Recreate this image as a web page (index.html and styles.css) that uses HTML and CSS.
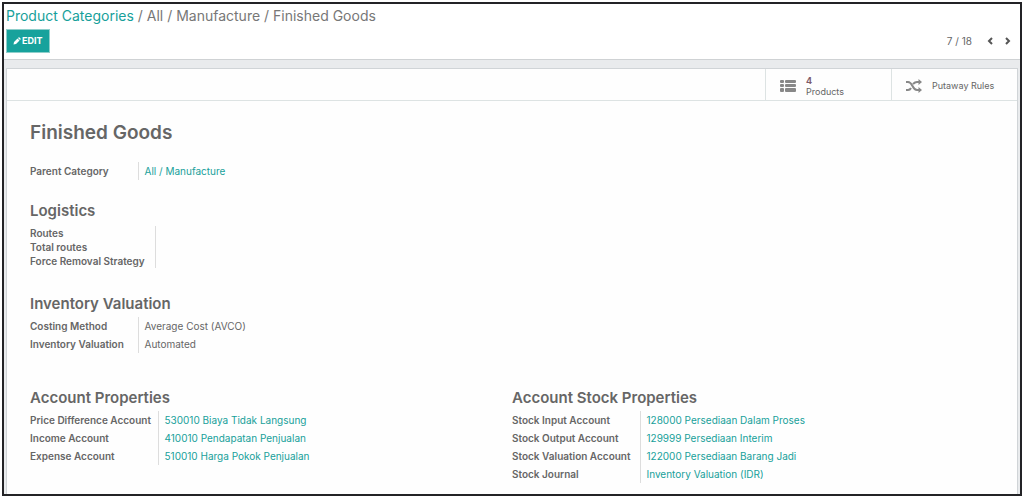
FILE: index.html
```html
<!DOCTYPE html>
<html lang="en">

<head>
    <meta charset="UTF-8">
    <meta name="viewport" content="width=device-width, initial-scale=1.0">
    <title>Finished Goods</title>
    <link rel="stylesheet" href="styles.css">
</head>

<body>
    <div class="window">
        <header class="control-panel">
            <nav class="breadcrumb">
                <a href="#">Product Categories</a> / All / Manufacture / Finished Goods
            </nav>
            <div class="toolbar">
                <button class="edit-button" type="button">
                    <svg class="pencil" viewBox="0 0 16 16"><path d="M1 15l1-5 7-7 4 4-7 7zM10 2l1-1q1-1 2 0l2 2q1 1 0 2l-1 1z"/></svg>
                    EDIT
                </button>
                <div class="pager">
                    <span class="pager-value">7 / 18</span>
                    <button class="pager-button" type="button" aria-label="Previous">
                        <svg viewBox="0 0 8 10"><path d="M6 2L3 5l3 3"/></svg>
                    </button>
                    <button class="pager-button" type="button" aria-label="Next">
                        <svg viewBox="0 0 8 10"><path d="M2 2l3 3-3 3"/></svg>
                    </button>
                </div>
            </div>
        </header>

        <main class="content">
            <div class="sheet">
                <div class="stat-bar">
                    <button class="stat-button" type="button">
                        <svg class="stat-icon" viewBox="0 0 16 14">
                            <rect x="0" y="1" width="4" height="3" rx="1"/>
                            <rect x="5" y="1" width="11" height="3" rx="1"/>
                            <rect x="0" y="5" width="4" height="3" rx="1"/>
                            <rect x="5" y="5" width="11" height="3" rx="1"/>
                            <rect x="0" y="9" width="4" height="4" rx="1"/>
                            <rect x="5" y="9" width="11" height="4" rx="1"/>
                        </svg>
                        <span class="stat-info"><b class="stat-value">4</b>Products</span>
                    </button>
                    <button class="stat-button" type="button">
                        <svg class="stat-icon" viewBox="0 0 16 14">
                            <path class="stroke" d="M0 3h2c5 0 4 8 9 8h2M0 11h2q2 0 3-2M7 5q2-2 4-2h2"/>
                            <path d="M12.500 0L16 3l-3.500 3zM12.500 8l3.500 3-3.500 3z"/>
                        </svg>
                        <span class="stat-info">Putaway Rules</span>
                    </button>
                </div>

                <div class="form">
                    <h1>Finished Goods</h1>

                    <table class="fields parent">
                        <tr><th scope="row">Parent Category</th><td><a href="#">All / Manufacture</a></td></tr>
                    </table>

                    <section class="group">
                        <h2>Logistics</h2>
                        <table class="fields compact">
                            <tr><th scope="row">Routes</th><td></td></tr>
                            <tr><th scope="row">Total routes</th><td></td></tr>
                            <tr><th scope="row">Force Removal Strategy</th><td></td></tr>
                        </table>
                    </section>

                    <section class="group">
                        <h2>Inventory Valuation</h2>
                        <table class="fields">
                            <tr><th scope="row">Costing Method</th><td>Average Cost (AVCO)</td></tr>
                            <tr><th scope="row">Inventory Valuation</th><td>Automated</td></tr>
                        </table>
                    </section>

                    <div class="columns">
                        <section class="group">
                            <h2>Account Properties</h2>
                            <table class="fields wide">
                                <tr><th scope="row">Price Difference Account</th><td><a href="#">530010 Biaya Tidak Langsung</a></td></tr>
                                <tr><th scope="row">Income Account</th><td><a href="#">410010 Pendapatan Penjualan</a></td></tr>
                                <tr><th scope="row">Expense Account</th><td><a href="#">510010 Harga Pokok Penjualan</a></td></tr>
                            </table>
                        </section>
                        <section class="group">
                            <h2>Account Stock Properties</h2>
                            <table class="fields wide">
                                <tr><th scope="row">Stock Input Account</th><td><a href="#">128000 Persediaan Dalam Proses</a></td></tr>
                                <tr><th scope="row">Stock Output Account</th><td><a href="#">129999 Persediaan Interim</a></td></tr>
                                <tr><th scope="row">Stock Valuation Account</th><td><a href="#">122000 Persediaan Barang Jadi</a></td></tr>
                                <tr><th scope="row">Stock Journal</th><td><a href="#">Inventory Valuation (IDR)</a></td></tr>
                            </table>
                        </section>
                    </div>
                </div>
            </div>
        </main>
    </div>
</body>

</html>
```
FILE: styles.css
```css
* {
    box-sizing: border-box;
}

body {
    margin: 0;
    padding: 2px;
    min-height: 100vh;
    display: flex;
    background-color: #ffffff;
    color: #666666;
    font-family: Inter, "Open Sans", sans-serif;
    font-size: 10px;
    line-height: 18px;
}

a {
    color: #17a09a;
    text-decoration: none;
}

button {
    font: inherit;
    color: inherit;
    background: none;
    border: none;
    padding: 0;
    cursor: pointer;
}

.window {
    flex: 1;
    display: flex;
    flex-direction: column;
    border: 2px solid #232326;
}

.control-panel {
    padding: 2px 3px 6px 2px;
    border-bottom: 1px solid #cfd2d4;
}

.breadcrumb {
    font-size: 14px;
    line-height: 20px;
    color: #777777;
}

.toolbar {
    display: flex;
    justify-content: space-between;
    align-items: center;
    margin-top: 3px;
}

.edit-button {
    display: flex;
    align-items: center;
    gap: 1px;
    height: 24px;
    padding: 0 6px;
    border: 1px solid #8fcfcb;
    background-color: #17a29c;
    color: #ffffff;
    font-size: 9px;
    font-weight: 700;
}

.pencil {
    width: 8px;
    height: 8px;
    fill: currentColor;
}

.pager {
    display: flex;
    align-items: center;
}

.pager-value {
    margin-right: 9px;
}

.pager-button {
    display: flex;
    padding: 0 5px;
}

.pager-button svg {
    width: 8px;
    height: 10px;
    fill: none;
    stroke: #555555;
    stroke-width: 2;
}

.content {
    flex: 1;
    display: flex;
    padding: 8px 2px 0;
    background-color: #e9ebed;
}

.sheet {
    flex: 1;
    border: 1px solid #d0d4d7;
    border-bottom: none;
    background-color: #fefefe;
}

.stat-bar {
    display: flex;
    justify-content: flex-end;
    border-bottom: 1px solid #dde3e3;
}

.stat-button {
    display: flex;
    align-items: center;
    gap: 10px;
    width: 126px;
    height: 31px;
    padding: 2px 0 0 14px;
    border-left: 1px solid #dde3e3;
    font-size: 9px;
    line-height: 11px;
    text-align: left;
}

.stat-icon {
    width: 16px;
    height: 14px;
    fill: #888888;
}

.stat-icon .stroke {
    fill: none;
    stroke: #888888;
    stroke-width: 2;
}

.stat-value {
    display: block;
    color: #7c5a6a;
}

.form {
    padding: 19px 23px 10px;
}

h1 {
    margin: 0 0 16px;
    font-size: 19px;
    line-height: 26px;
    font-weight: 600;
}

h2 {
    margin: 0 0 3px;
    font-size: 15px;
    line-height: 20px;
    font-weight: 600;
}

.fields {
    border-collapse: collapse;
}

.fields th {
    min-width: 108px;
    height: 18px;
    padding: 0 10px 0 0;
    border-right: 1px solid #dddddd;
    font-weight: 600;
    line-height: 14px;
    text-align: left;
    white-space: nowrap;
}

.fields td {
    padding: 0 0 0 6px;
    line-height: 14px;
    white-space: nowrap;
}

.fields.compact {
    margin-top: 5px;
}

.fields.compact th {
    height: 14px;
}

.fields.wide th {
    min-width: 128px;
    padding-right: 6px;
}

.parent {
    margin-bottom: 21px;
}

.group {
    margin-bottom: 26px;
}

.columns {
    display: grid;
    grid-template-columns: 1fr 1fr;
    margin-top: 35px;
}

.columns .group {
    margin-bottom: 0;
}
```
